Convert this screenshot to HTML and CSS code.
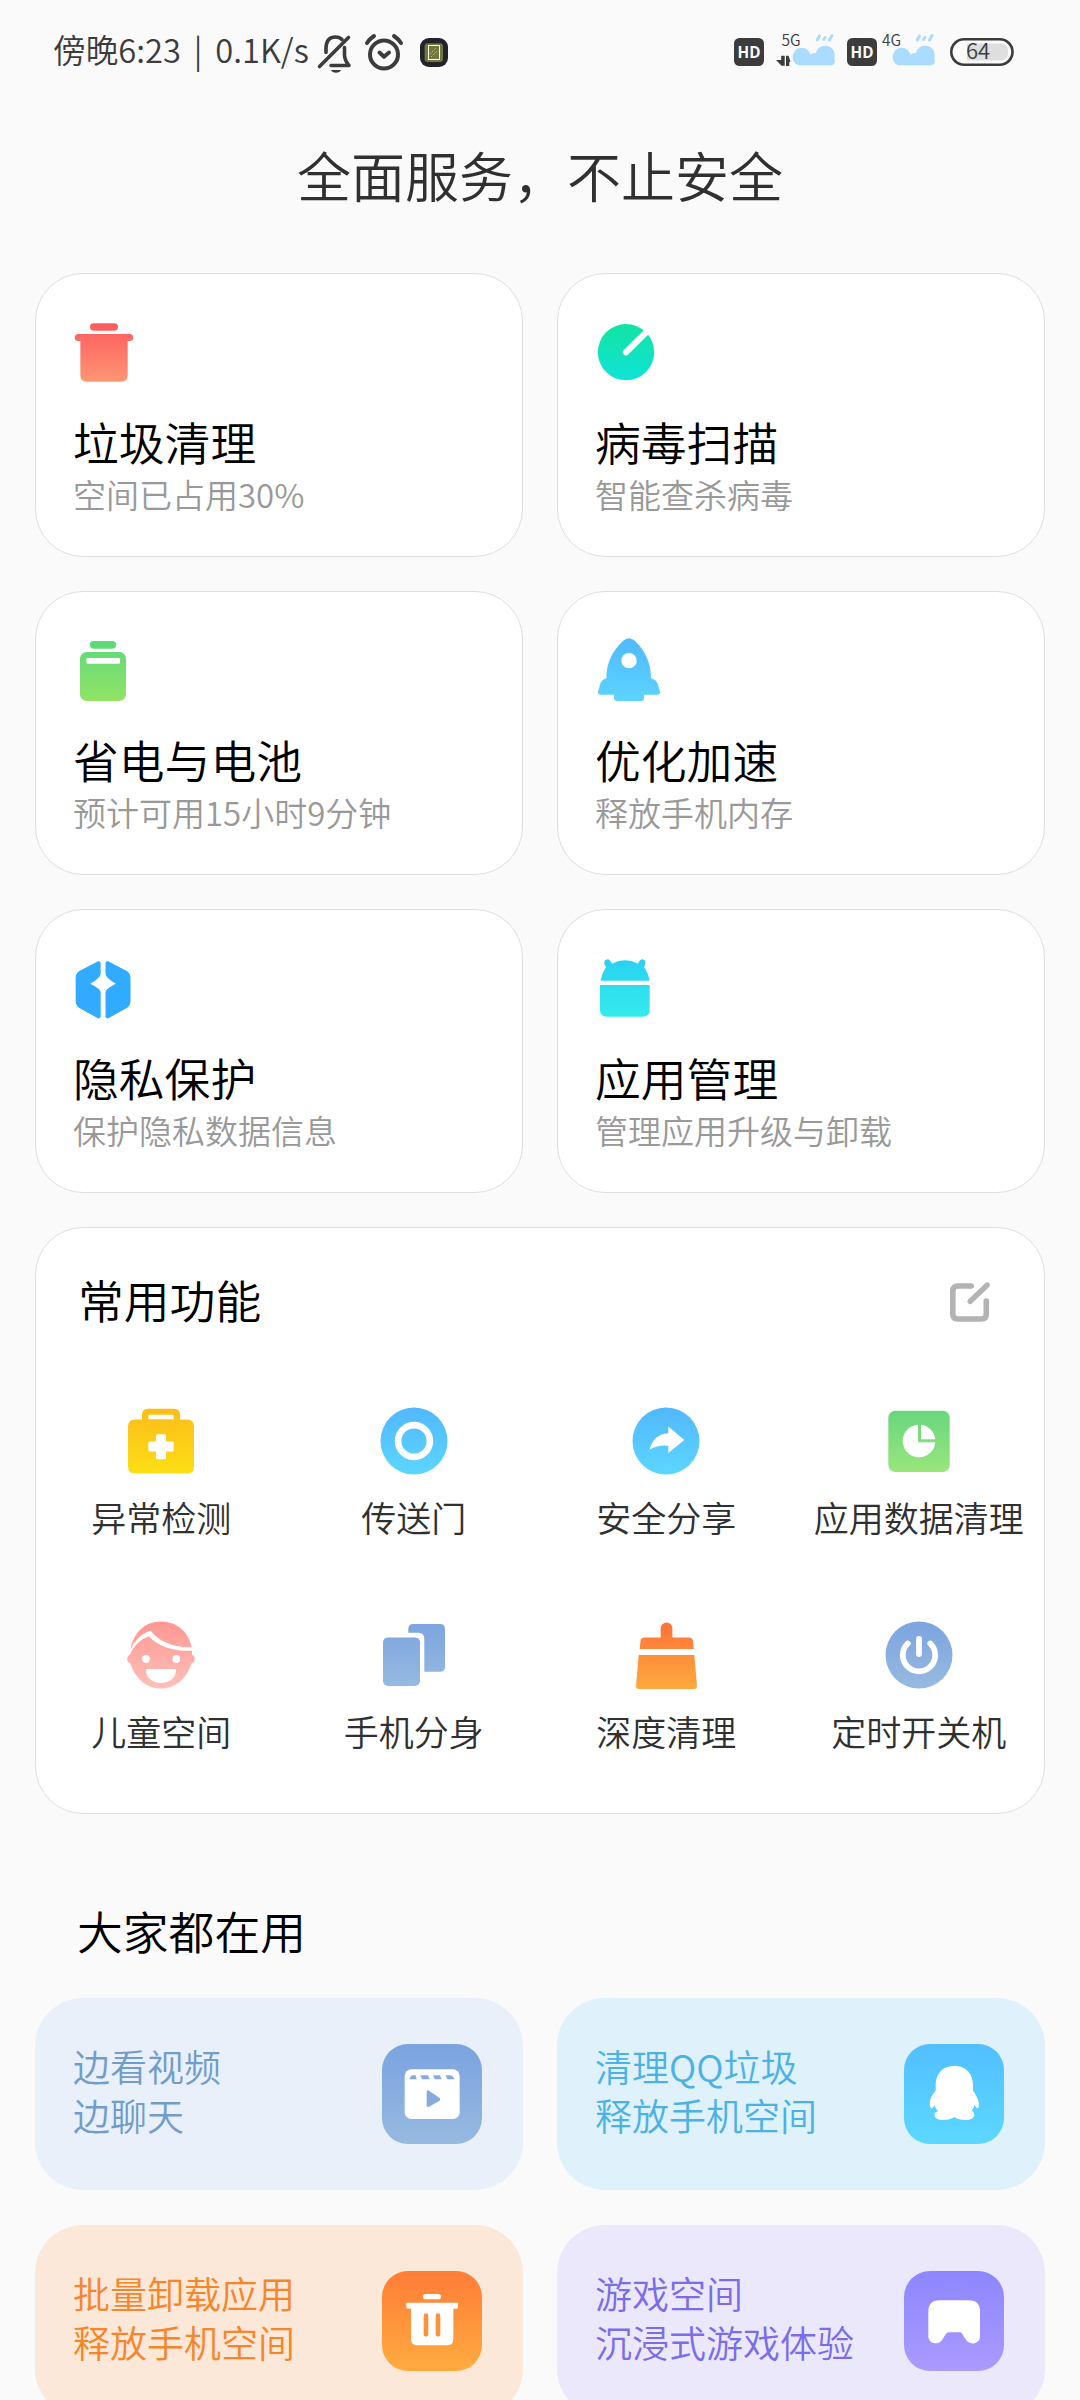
FILE: index.html
```html
<!DOCTYPE html>
<html lang="zh-CN">
<head>
<meta charset="utf-8">
<title>全面服务，不止安全</title>
<link rel="stylesheet" href="styles.css">
</head>
<body>
<svg class="defs" width="0" height="0" aria-hidden="true">
  <defs>
    <linearGradient id="red" gradientUnits="userSpaceOnUse" x1="0" y1="190" x2="0" y2="365"><stop offset="0" stop-color="#fc5b5e"/><stop offset="1" stop-color="#ff9672"/></linearGradient>
    <linearGradient id="mint" gradientUnits="userSpaceOnUse" x1="0" y1="192" x2="0" y2="361"><stop offset="0" stop-color="#12e3a3"/><stop offset="1" stop-color="#10e3d8"/></linearGradient>
    <linearGradient id="lime" gradientUnits="userSpaceOnUse" x1="0" y1="183" x2="0" y2="363"><stop offset="0" stop-color="#5bd97b"/><stop offset="1" stop-color="#92e365"/></linearGradient>
    <linearGradient id="sky" gradientUnits="userSpaceOnUse" x1="0" y1="174" x2="0" y2="363"><stop offset="0" stop-color="#50b9ff"/><stop offset="1" stop-color="#5cd4ff"/></linearGradient>
    <linearGradient id="cyan" gradientUnits="userSpaceOnUse" x1="0" y1="178" x2="0" y2="350"><stop offset="0" stop-color="#28d1f2"/><stop offset="1" stop-color="#34ebeb"/></linearGradient>
    <linearGradient id="g-yellow" gradientUnits="userSpaceOnUse" x1="0" y1="-33" x2="0" y2="33"><stop offset="0" stop-color="#fcbc1a"/><stop offset="1" stop-color="#fcdf15"/></linearGradient>
    <linearGradient id="g-blue" gradientUnits="userSpaceOnUse" x1="0" y1="-33" x2="0" y2="33"><stop offset="0" stop-color="#52b8ff"/><stop offset="1" stop-color="#5cd6ff"/></linearGradient>
    <linearGradient id="g-green" gradientUnits="userSpaceOnUse" x1="0" y1="-33" x2="0" y2="33"><stop offset="0" stop-color="#66d67e"/><stop offset="1" stop-color="#9be67b"/></linearGradient>
    <linearGradient id="g-pink" gradientUnits="userSpaceOnUse" x1="0" y1="-33" x2="0" y2="33"><stop offset="0" stop-color="#ff9792"/><stop offset="1" stop-color="#fdc0b9"/></linearGradient>
    <linearGradient id="g-steel" gradientUnits="userSpaceOnUse" x1="0" y1="-33" x2="0" y2="33"><stop offset="0" stop-color="#7ca4df"/><stop offset="1" stop-color="#97bae1"/></linearGradient>
    <linearGradient id="g-orange" gradientUnits="userSpaceOnUse" x1="0" y1="-33" x2="0" y2="33"><stop offset="0" stop-color="#ff7138"/><stop offset="1" stop-color="#fea93e"/></linearGradient>
  </defs>
</svg>

<header class="status">
  <span class="status-text">傍晚6:23 | 0.1K/s</span>
  <svg class="bell" width="36" height="40" viewBox="0 0 36 40" fill="none" stroke="#3c3c3c" stroke-width="3.6" stroke-linecap="round" stroke-linejoin="round">
    <path d="M9 18.500V14C9.200 6.500 13 3 18.500 3c2.700 0 5 .9 6.500 2.500M27.500 13.500V21c.1 3.700 1.500 7 4.500 10.500H14"/>
    <path d="M2.500 32.500L31.500 3.500"/><path d="M14 36h10c-.8 1.800-2.700 2.800-5 2.800S14.800 37.800 14 36z" fill="#3c3c3c" stroke="none"/>
  </svg>
  <svg class="alarm" width="38" height="38" viewBox="0 0 38 38" fill="none" stroke="#3c3c3c" stroke-width="4" stroke-linecap="round" stroke-linejoin="round">
    <circle cx="19" cy="20.500" r="14"/><path d="M2 9Q4.500 5 9 2M36 9Q33.500 5 29 2M14.500 18.500l4.500 4.200 5-4.200"/>
  </svg>
  <svg class="app" width="28" height="29" viewBox="0 0 28 29">
    <rect width="28" height="29" rx="9" fill="#22232b"/><rect x="4.600" y="5.200" width="18.400" height="18.700" rx="3" fill="#70763d"/>
    <rect x="8.500" y="7.500" width="11" height="14" fill="none" stroke="#ffffd8" stroke-width="1"/><path d="M10 16l6-6M11 19l6-6" stroke="#c6cb94" stroke-width=".9" stroke-dasharray="1.500 1"/>
  </svg>
  <div class="status-right">
    <svg width="30" height="28" viewBox="0 0 30 28"><rect width="30" height="28" rx="5.500" fill="#3c3c3c"/><text class="hd" x="3.600" y="19.800" textLength="23" lengthAdjust="spacingAndGlyphs">HD</text></svg>
    <svg class="sim1" width="62" height="36" viewBox="776 30 62 36">
      <text class="net" x="781.500" y="46">5G</text>
      <path d="M784.700 55.700h-3.500v4.300H776l5.500 5.700h3.200zM786 66h3.300v-4.300h1.200L788.500 55.700H786z" fill="#3c3c3c"/>
      <use href="#weather"/>
    </svg>
    <svg class="hd2" width="30" height="28" viewBox="0 0 30 28"><rect width="30" height="28" rx="5.500" fill="#3c3c3c"/><text class="hd" x="3.600" y="19.800" textLength="23" lengthAdjust="spacingAndGlyphs">HD</text></svg>
    <svg class="sim2" width="56" height="36" viewBox="782 30 56 36">
      <text class="net" x="782" y="46">4G</text>
      <g id="weather"><path d="M799 65.300c-3.500-.8-6.300-3.600-6.300-8.300 0-5 4-9.300 9-9.300 4.300 0 7.500 3 9 7.300 1.500-2 3-2.300 5.300-2 1-4.500 4.500-7.300 9.200-7.300 5.500 0 9.500 4 9.500 9.500 0 1.500-.1 2.800-.5 3.800 1.200 1 1 4.500-1 5.500-1.300.8-3 .8-5 .8z" fill="#a9dcff"/><path d="M819.500 36l-2.300 4M825 37.500l-1.300 2M832 35.500l-2.500 4.500" stroke="#a9dcff" stroke-width="3" stroke-linecap="round"/></g>
    </svg>
    <svg class="battery" width="64" height="28" viewBox="0 0 64 28"><rect x="1.300" y="1.300" width="61.200" height="25.400" rx="12.700" fill="#fafafa" stroke="#3c3c3c" stroke-width="2.600"/><path d="M17 5.500h34a7 7 0 0 1 7 7v3a7 7 0 0 1-7 7H17z" fill="#dedede"/><text class="level" x="16" y="21.200">64</text></svg>
  </div>
</header>

<h1 class="title">全面服务，不止安全</h1>

<main>
<section class="cards">
  <article class="card">
    <svg class="card-icon" viewBox="159 165 216 216" fill="url(#red)"><path d="M221 190h62a11 11 0 0 1 0 22h-62a11 11 0 0 1 0-22zM175 222h154a10.500 10.500 0 0 1 0 21h-6v102q0 20-20 20H201q-20 0-20-20V243h-6a10.500 10.500 0 0 1 0-21z"/></svg>
    <h2>垃圾清理</h2><p>空间已占用30%</p>
  </article>
  <article class="card">
    <svg class="card-icon" viewBox="165 165 216 216"><circle cx="258" cy="276.500" r="84.500" fill="url(#mint)"/><path d="M258 277l68-68" stroke="#fff" stroke-width="19" stroke-linecap="round"/></svg>
    <h2>病毒扫描</h2><p>智能查杀病毒</p>
  </article>
  <article class="card">
    <svg class="card-icon" viewBox="159 159 216 216" fill="url(#lime)"><path d="M221 183h56a11.500 11.500 0 0 1 0 23h-56a11.500 11.500 0 0 1 0-23z"/><rect x="180" y="216" width="138" height="147" rx="20"/><rect x="199" y="234" width="101" height="17" rx="4" fill="#fff"/></svg>
    <h2>省电与电池</h2><p>预计可用15小时9分钟</p>
  </article>
  <article class="card">
    <svg class="card-icon" viewBox="165 159 216 216"><path fill="url(#sky)" d="M249 183q18-17 36 0 48 46 48 112 17 4 21 19l6 21q1 9-9 9h-39v9q0 10-10 10h-69q-11 0-11-10v-9h-39q-10 0-9-9l6-21q4-15 19-19 0-66 50-112z"/><circle cx="267" cy="242" r="23" fill="#fff"/></svg>
    <h2>优化加速</h2><p>释放手机内存</p>
  </article>
  <article class="card">
    <svg class="card-icon" viewBox="159 153 216 216" fill="#30abff"><path id="shield" d="M242 190v31q0 12-31 30 31 15 31 27v71q0 8-8 6l-56-31q-11-7-11-20v-70q0-14 11-21l56-29q8-2 8 6z"/><use href="#shield" transform="matrix(-1 0 0 1 498.500 0)"/></svg>
    <h2>隐私保护</h2><p>保护隐私数据信息</p>
  </article>
  <article class="card">
    <svg class="card-icon" viewBox="165 153 216 216" fill="url(#cyan)"><path d="M182 242q5-26 17-40c-9-9-8-22 3-24 7 0 9 5 14 13q39-20 78 0c4-8 7-13 14-13 10 2 10 15 4 24q13 16 16 40zM180 255h149v74q0 21-21 21H201q-21 0-21-21z"/></svg>
    <h2>应用管理</h2><p>管理应用升级与卸载</p>
  </article>
</section>

<section class="common">
  <div class="common-head">
    <h2>常用功能</h2>
    <svg width="44" height="44" viewBox="0 0 44 44" fill="none" stroke="#b3b3b3" stroke-width="5.600" stroke-linecap="round" stroke-linejoin="round"><path d="M23.200 6H9.800q-5 0-5 5v23q0 5 5 5h23.500q5 0 5-5V21"/><path d="M39.300 5L22 21.500" stroke-width="5.200"/></svg>
  </div>
  <div class="grid">
    <div class="tool"><svg viewBox="-42 -42 84 84"><path fill="url(#g-yellow)" fill-rule="evenodd" d="M-19-21.500v-4.800q0-6 6-6h26q6 0 6 6v4.800h7q7 0 7 7v40q0 7-7 7h-52q-7 0-7-7v-40q0-7 7-7zM-12.700-25.200v3.500h25.400v-3.500q0-1-1-1h-23.400q-1 0-1 1z"/><path d="M-3.500-6.700h7Q5-6.700 5-5.200V.4h6.200q1.500 0 1.500 1.500V9q0 1.500-1.500 1.500H5v6.200q0 1.500-1.500 1.500h-7q-1.500 0-1.500-1.500v-6.200h-6.200q-1.500 0-1.500-1.500V1.900q0-1.500 1.500-1.500H-5v-5.600q0-1.500 1.500-1.500z" fill="#fff"/></svg><span>异常检测</span></div>
    <div class="tool"><svg viewBox="-42 -42 84 84"><circle r="33.500" fill="url(#g-blue)"/><circle r="15.900" fill="none" stroke="#fff" stroke-width="6.600"/></svg><span>传送门</span></div>
    <div class="tool"><svg viewBox="-42 -42 84 84"><circle r="33.500" fill="url(#g-blue)"/><path d="M2.300-14.500L18.300-1.100 2.300 11.900V4.800Q-7 3.500-16.300 8.400-12.500-7 2.300-7.800z" fill="#fff"/></svg><span>安全分享</span></div>
    <div class="tool"><svg viewBox="-42 -42 84 84"><rect x="-30.700" y="-30.200" width="61.400" height="61.200" rx="7" fill="url(#g-green)"/><path d="M-1-16.300A16.300 16.300 0 1 0 16.300 1.200H0q-1 0-1-1zM2-16.200A16.300 16.300 0 0 1 16.200-1.800H2z" fill="#fff"/></svg><span>应用数据清理</span></div>
    <div class="tool"><svg viewBox="-42 -42 84 84"><path fill="url(#g-pink)" d="M-30.700-4.500C-28-22-16.500-33.500 0-33.500S28-22 30.700-7.800C12-7-3-14-10.500-24.500-20-21-27-14-30.700-4.500zM-12-18.500C-3-8.500 13-3.500 31-4.200V-.5C35 1.500 34.500 7 30.500 8.500 26 23 15 33.500 0 33.500S-26 23-30.500 8.500C-34.500 7-35 1.500-31-.5-27-9.500-21-15.500-12-18.500z"/><g fill="#fff"><circle cx="-15" cy="4" r="3.900"/><circle cx="15.300" cy="4" r="3.900"/><path d="M-15 15q0-1 1-1h28q1 0 1 1C15 22.500 9 28 0 28s-15-5.500-15-13z"/></g></svg><span>儿童空间</span></div>
    <div class="tool"><svg viewBox="-42 -42 84 84" fill="url(#g-steel)"><path d="M-5.700-22.300V-26q0-5 5-5H26q5 0 5 5v37.800q0 5-5 5H10.300v-33q0-6.100-6-6.100z"/><rect x="-31" y="-17.600" width="37" height="48.600" rx="5"/></svg><span>手机分身</span></div>
    <div class="tool"><svg viewBox="-42 -42 84 84" fill="url(#g-orange)"><path d="M-5.300-17.600v-9a5.850 5.850 0 0 1 11.700 0v9H23q3.500 0 4 3.500l.8 8.100H-26.300l.8-8.100q.5-3.500 4-3.500zM-27.300 0h55.600L31 30.500q.2 3.500-3 3.500h-55q-3.200 0-3-3.500z"/></svg><span>深度清理</span></div>
    <div class="tool"><svg viewBox="-42 -42 84 84"><circle r="33.500" fill="url(#g-steel)"/><path d="M-11.300-11.500a16.200 16.200 0 1 0 22.600 0M0-16V-1" fill="none" stroke="#fff" stroke-width="5.800" stroke-linecap="round"/></svg><span>定时开关机</span></div>
  </div>
</section>

<h2 class="section-title">大家都在用</h2>
<section class="promos">
  <article class="promo steel"><p>边看视频<br>边聊天</p>
    <svg viewBox="0 0 300 300"><rect x="68" y="76" width="165" height="149" rx="20" fill="#fff"/><path d="M82 106q4-12 10-12h9l3 12zM115 94h23l5 12h-23zM153 94h21l5 12h-21zM191 94h12q12 2 14 12h-21zM134 144q0-8 7-4l32 22q4 4 0 8l-32 18q-7 3-7-4z" fill="#88aade"/></svg></article>
  <article class="promo blue"><p>清理QQ垃圾<br>释放手机空间</p>
    <svg viewBox="0 0 300 300"><path fill="#fff" d="M151 65c35 0 56 25 56 57v19c12 14 20 34 17 49-2 6-9 0-13-8-1 7-3 12-8 18 11 6 10 17 1 24-15 7-39 5-53-5-14 10-38 12-53 5-9-8-9-18 4-23-6-6-9-12-10-19-3 8-10 14-13 8-5-17 3-37 16-50v-17c0-33 20-58 56-58z"/></svg></article>
  <article class="promo orange"><p>批量卸载应用<br>释放手机空间</p>
    <svg viewBox="0 0 300 300"><path fill="#fff" d="M131 69h38a8 8 0 0 1 0 16h-38a8 8 0 0 1 0-16zM73 95h155v13q0 5-5 5h-9v91q0 19-19 19h-89q-19 0-19-19v-91h-9q-5 0-5-5z"/><path d="M132 134v56M168 134v56" stroke="#fb923c" stroke-width="14" stroke-linecap="round"/></svg></article>
  <article class="promo violet"><p>游戏空间<br>沉浸式游戏体验</p>
    <svg viewBox="0 0 300 300"><path fill="#fff" d="M107 88h87q34 0 34 34v75c-2 24-33 27-43 8-9-13-11-21-17-21h-35c-6 0-9 9-18 22-11 17-39 14-42-8v-76q0-34 34-34z"/></svg></article>
</section>
</main>
</body>
</html>
```
FILE: styles.css
```css
* { box-sizing: border-box; }
html { overflow: hidden; }
body {
  margin: 0;
  height: 2400px;
  overflow: hidden;
  background: #fafafa;
  color: #000;
  font-family: "Noto Sans CJK SC", sans-serif;
  font-weight: 350;
}
h1, h2, p { margin: 0; font-weight: inherit; }
svg { display: block; flex: none; overflow: visible; }
.defs { position: absolute; }

.status { display: flex; align-items: flex-start; height: 101px; padding: 0 66px 0 53px; }
.status-text { width: 264px; font-size: 32.7px; line-height: 48px; margin-top: 25px; color: #3c3c3c; white-space: nowrap; word-spacing: 5.5px; }
.bell { margin-top: 34px; }
.alarm { margin: 34px 0 0 12px; }
.app { margin: 38px 0 0 17px; }
.status-right { display: flex; margin-left: auto; padding-top: 38px; }
.hd { font: 700 16px "Open Sans", sans-serif; fill: #fafafa; }
.net { font-size: 15.5px; fill: #3c3c3c; }
.level { font-size: 22px; fill: #3c3c3c; }
.sim1 { margin: -8px 0 0 12px; }
.hd2 { margin-left: 9px; }
.sim2 { margin: -8px 0 0 5px; }
.battery { margin-left: 12px; }

.title { height: 172px; padding-top: 34px; font-size: 54px; line-height: 80px; text-align: center; color: #303030; }

main { padding: 0 35px; }
.cards { display: grid; grid-template-columns: 1fr 1fr; gap: 34px; }
.card { height: 284px; padding: 41px 37px; border: 1px solid #dedede; border-radius: 48px; background: #fff; }
.card-icon { width: 72px; height: 72px; }
.card h2 { margin-top: 26px; font-size: 45.8px; line-height: 56px; }
.card p { margin-top: 3px; font-size: 33px; line-height: 45px; color: #999; }

.common { height: 587px; margin-top: 34px; border: 1px solid #dedede; border-radius: 48px; background: #fff; }
.common-head { display: flex; align-items: center; justify-content: space-between; height: 146px; padding: 2px 52px 0 42px; }
.common-head h2 { padding-bottom: 6px; }
.common-head h2, .section-title { font-size: 45.8px; line-height: 60px; }
.grid { display: grid; grid-template-columns: repeat(4, 1fr); grid-auto-rows: 214px; margin: 25px -1px 0; }
.tool { display: flex; flex-direction: column; align-items: center; }
.tool svg { width: 84px; height: 84px; }
.tool span { margin-top: 10px; font-size: 35px; line-height: 48px; color: #303030; white-space: nowrap; }

.section-title { margin: 86px 0 38px 42px; }
.promos { display: grid; grid-template-columns: 1fr 1fr; gap: 35px 34px; }
.promo { display: flex; align-items: center; justify-content: space-between; height: 192px; padding: 0 41px 0 38px; border-radius: 48px; }
.promo p { margin-top: -6px; font-size: 37px; line-height: 49px; white-space: nowrap; }
.promo svg { width: 100px; height: 100px; border-radius: 26px; }
.steel { background: #e9f0fa; color: #719dcb; }
.steel svg { background: linear-gradient(#7ba3df, #96bae0); }
.blue { background: #dff1fb; color: #4cb2e5; }
.blue svg { background: linear-gradient(#52bfff, #5cd8ff); }
.orange { background: #fce8d9; color: #f7852a; }
.orange svg { background: linear-gradient(#ff7d38, #ffab3f); }
.violet { background: #ece8fb; color: #7b6de8; }
.violet svg { background: linear-gradient(#8d86ff, #ab9aff); }
```
